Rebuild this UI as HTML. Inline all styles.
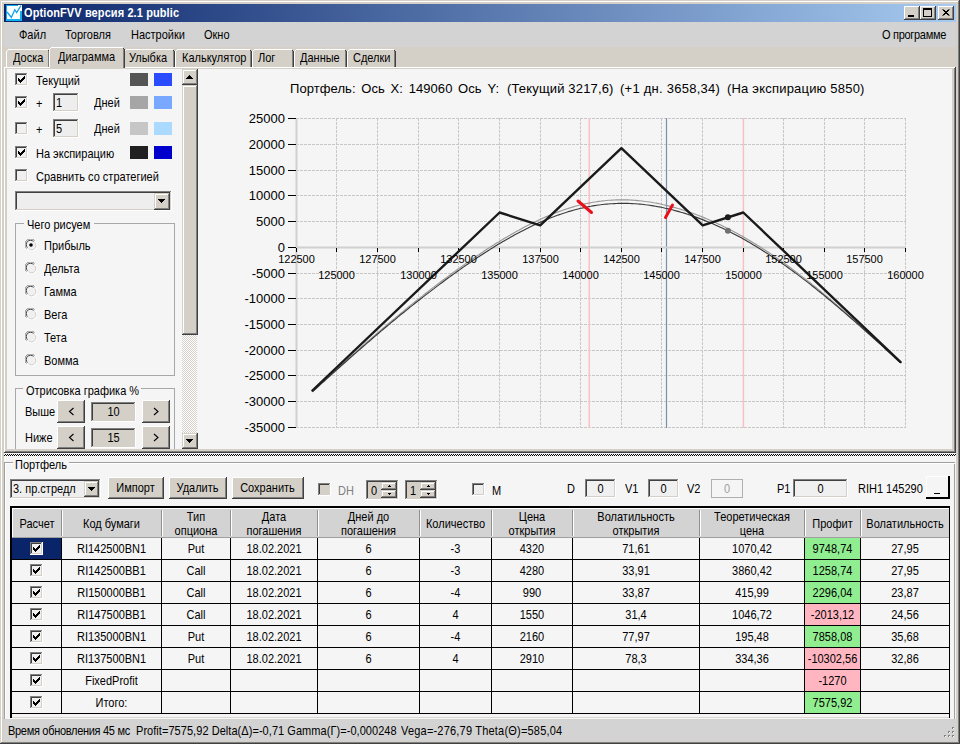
<!DOCTYPE html><html><head><meta charset="utf-8"><style>
html,body{margin:0;padding:0}
body{width:960px;height:744px;overflow:hidden;position:relative;background:#d4d0c8;font-family:"Liberation Sans",sans-serif;font-size:11px;color:#000}
.t{position:absolute;white-space:nowrap;line-height:13px;transform:scaleY(1.1);transform-origin:0 10.3px}
</style></head><body>
<div style="position:absolute;left:0px;top:0px;width:960px;height:744px;background:#404040"></div>
<div style="position:absolute;left:0px;top:0px;width:959px;height:743px;background:#d4d0c8"></div>
<div style="position:absolute;left:1px;top:1px;width:958px;height:742px;background:#808080"></div>
<div style="position:absolute;left:1px;top:1px;width:957px;height:741px;background:#fff"></div>
<div style="position:absolute;left:2px;top:2px;width:956px;height:740px;background:#d4d0c8"></div>
<div style="position:absolute;left:4px;top:4px;width:952px;height:18px;background:linear-gradient(to right,#0a246a,#a6caf0)"></div>
<svg style="position:absolute;left:6px;top:5px" width="16" height="16"><rect x="0" y="0" width="16" height="16" fill="#fff"/><rect x="0" y="0" width="1" height="16" fill="#12b0f0"/><rect x="0" y="14" width="16" height="2" fill="#12b0f0"/><rect x="14" y="6" width="2" height="10" fill="#12b0f0"/><rect x="0" y="0" width="12" height="1" fill="#12b0f0"/><path d="M0.5 7.5 L1.5 7.5 L5.3 12.5 L8.8 4.8 L10.7 7.5 L15 0.5" stroke="#12a0e8" stroke-width="1.3" fill="none"/></svg>
<div class="t" style="left:24px;top:7px;color:#fff;font-weight:bold;font-size:11px;letter-spacing:0.1px">OptionFVV версия 2.1 public</div>
<div style="position:absolute;left:904px;top:6px;width:16px;height:14px;background:#404040"></div>
<div style="position:absolute;left:904px;top:6px;width:15px;height:13px;background:#fff"></div>
<div style="position:absolute;left:905px;top:7px;width:14px;height:12px;background:#808080"></div>
<div style="position:absolute;left:905px;top:7px;width:13px;height:11px;background:#d4d0c8"></div>
<div style="position:absolute;left:920px;top:6px;width:16px;height:14px;background:#404040"></div>
<div style="position:absolute;left:920px;top:6px;width:15px;height:13px;background:#fff"></div>
<div style="position:absolute;left:921px;top:7px;width:14px;height:12px;background:#808080"></div>
<div style="position:absolute;left:921px;top:7px;width:13px;height:11px;background:#d4d0c8"></div>
<div style="position:absolute;left:938px;top:6px;width:16px;height:14px;background:#404040"></div>
<div style="position:absolute;left:938px;top:6px;width:15px;height:13px;background:#fff"></div>
<div style="position:absolute;left:939px;top:7px;width:14px;height:12px;background:#808080"></div>
<div style="position:absolute;left:939px;top:7px;width:13px;height:11px;background:#d4d0c8"></div>
<svg style="position:absolute;left:904px;top:6px" width="16" height="14"><rect x="4" y="9" width="6" height="2" fill="#000"/></svg>
<svg style="position:absolute;left:920px;top:6px" width="16" height="14"><rect x="3.5" y="2.5" width="8" height="8" fill="none" stroke="#000"/><rect x="3" y="3" width="9" height="1" fill="#000"/></svg>
<svg style="position:absolute;left:938px;top:6px" width="16" height="14"><path d="M4.5 3.5 L10.5 9.5 M10.5 3.5 L4.5 9.5 M5.5 3.5 L11.5 9.5 M11.5 3.5 L5.5 9.5" stroke="#000" stroke-width="1"/></svg>
<div style="position:absolute;left:4px;top:22px;width:952px;height:25px;background:#d3d3d3"></div>
<div class="t" style="left:19px;top:29px;">Файл</div>
<div class="t" style="left:65px;top:29px;">Торговля</div>
<div class="t" style="left:131px;top:29px;">Настройки</div>
<div class="t" style="left:204px;top:29px;">Окно</div>
<div class="t" style="left:882px;top:29px;letter-spacing:-0.3px">О программе</div>
<div style="position:absolute;left:4px;top:47px;width:952px;height:20px;background:#d4d0c8"></div>
<div style="position:absolute;left:4px;top:67px;width:952px;height:386px;background:#404040"></div>
<div style="position:absolute;left:4px;top:67px;width:951px;height:385px;background:#fff"></div>
<div style="position:absolute;left:5px;top:68px;width:950px;height:384px;background:#808080"></div>
<div style="position:absolute;left:5px;top:68px;width:949px;height:383px;background:#d4d0c8"></div>
<div style="position:absolute;left:8px;top:49px;width:40px;height:1px;background:#fff"></div>
<div style="position:absolute;left:7px;top:50px;width:1px;height:1px;background:#fff"></div>
<div style="position:absolute;left:6px;top:51px;width:1px;height:16px;background:#fff"></div>
<div style="position:absolute;left:48px;top:50px;width:1px;height:1px;background:#404040"></div>
<div style="position:absolute;left:48px;top:51px;width:1px;height:16px;background:#808080"></div>
<div style="position:absolute;left:49px;top:51px;width:1px;height:16px;background:#404040"></div>
<div class="t" style="left:13px;top:52px;">Доска</div>
<div style="position:absolute;left:126px;top:49px;width:47px;height:1px;background:#fff"></div>
<div style="position:absolute;left:125px;top:50px;width:1px;height:1px;background:#fff"></div>
<div style="position:absolute;left:124px;top:51px;width:1px;height:16px;background:#fff"></div>
<div style="position:absolute;left:173px;top:50px;width:1px;height:1px;background:#404040"></div>
<div style="position:absolute;left:173px;top:51px;width:1px;height:16px;background:#808080"></div>
<div style="position:absolute;left:174px;top:51px;width:1px;height:16px;background:#404040"></div>
<div class="t" style="left:129px;top:52px;">Улыбка</div>
<div style="position:absolute;left:177px;top:49px;width:73px;height:1px;background:#fff"></div>
<div style="position:absolute;left:176px;top:50px;width:1px;height:1px;background:#fff"></div>
<div style="position:absolute;left:175px;top:51px;width:1px;height:16px;background:#fff"></div>
<div style="position:absolute;left:250px;top:50px;width:1px;height:1px;background:#404040"></div>
<div style="position:absolute;left:250px;top:51px;width:1px;height:16px;background:#808080"></div>
<div style="position:absolute;left:251px;top:51px;width:1px;height:16px;background:#404040"></div>
<div class="t" style="left:182px;top:52px;">Калькулятор</div>
<div style="position:absolute;left:254px;top:49px;width:38px;height:1px;background:#fff"></div>
<div style="position:absolute;left:253px;top:50px;width:1px;height:1px;background:#fff"></div>
<div style="position:absolute;left:252px;top:51px;width:1px;height:16px;background:#fff"></div>
<div style="position:absolute;left:292px;top:50px;width:1px;height:1px;background:#404040"></div>
<div style="position:absolute;left:292px;top:51px;width:1px;height:16px;background:#808080"></div>
<div style="position:absolute;left:293px;top:51px;width:1px;height:16px;background:#404040"></div>
<div class="t" style="left:258px;top:52px;">Лог</div>
<div style="position:absolute;left:296px;top:49px;width:49px;height:1px;background:#fff"></div>
<div style="position:absolute;left:295px;top:50px;width:1px;height:1px;background:#fff"></div>
<div style="position:absolute;left:294px;top:51px;width:1px;height:16px;background:#fff"></div>
<div style="position:absolute;left:345px;top:50px;width:1px;height:1px;background:#404040"></div>
<div style="position:absolute;left:345px;top:51px;width:1px;height:16px;background:#808080"></div>
<div style="position:absolute;left:346px;top:51px;width:1px;height:16px;background:#404040"></div>
<div class="t" style="left:300px;top:52px;">Данные</div>
<div style="position:absolute;left:349px;top:49px;width:45px;height:1px;background:#fff"></div>
<div style="position:absolute;left:348px;top:50px;width:1px;height:1px;background:#fff"></div>
<div style="position:absolute;left:347px;top:51px;width:1px;height:16px;background:#fff"></div>
<div style="position:absolute;left:394px;top:50px;width:1px;height:1px;background:#404040"></div>
<div style="position:absolute;left:394px;top:51px;width:1px;height:16px;background:#808080"></div>
<div style="position:absolute;left:395px;top:51px;width:1px;height:16px;background:#404040"></div>
<div class="t" style="left:353px;top:52px;">Сделки</div>
<div style="position:absolute;left:50px;top:48px;width:73px;height:20px;background:#d4d0c8"></div>
<div style="position:absolute;left:51px;top:47px;width:72px;height:1px;background:#fff"></div>
<div style="position:absolute;left:50px;top:48px;width:1px;height:1px;background:#fff"></div>
<div style="position:absolute;left:49px;top:49px;width:1px;height:19px;background:#fff"></div>
<div style="position:absolute;left:123px;top:48px;width:1px;height:1px;background:#404040"></div>
<div style="position:absolute;left:123px;top:49px;width:1px;height:19px;background:#808080"></div>
<div style="position:absolute;left:124px;top:49px;width:1px;height:19px;background:#404040"></div>
<div style="position:absolute;left:50px;top:67px;width:73px;height:2px;background:#d4d0c8"></div>
<div class="t" style="left:58px;top:51px;">Диаграмма</div>
<div style="position:absolute;left:7px;top:69px;width:945px;height:380px;background:#f5f5f5"></div>
<div style="position:absolute;left:0;top:0;width:960px;height:744px;clip-path:inset(69px 8px 295px 7px)">
<div style="position:absolute;left:15px;top:73px;width:13px;height:13px;background:#fff"></div>
<div style="position:absolute;left:15px;top:73px;width:12px;height:12px;background:#808080"></div>
<div style="position:absolute;left:16px;top:74px;width:11px;height:11px;background:#d4d0c8"></div>
<div style="position:absolute;left:16px;top:74px;width:10px;height:10px;background:#404040"></div>
<div style="position:absolute;left:17px;top:75px;width:9px;height:9px;background:#f0f0f0"></div>
<svg style="position:absolute;left:15px;top:73px" width="13" height="13"><path d="M9 3h1v1h-1zM8 4h2v1h-2zM3 5h1v1h-1zM7 5h3v1h-3zM3 6h2v1h-2zM6 6h3v1h-3zM3 7h5v1h-5zM4 8h3v1h-3zM5 9h1v1h-1z" fill="#000"/></svg>
<div style="position:absolute;left:15px;top:96px;width:13px;height:13px;background:#fff"></div>
<div style="position:absolute;left:15px;top:96px;width:12px;height:12px;background:#808080"></div>
<div style="position:absolute;left:16px;top:97px;width:11px;height:11px;background:#d4d0c8"></div>
<div style="position:absolute;left:16px;top:97px;width:10px;height:10px;background:#404040"></div>
<div style="position:absolute;left:17px;top:98px;width:9px;height:9px;background:#f0f0f0"></div>
<svg style="position:absolute;left:15px;top:96px" width="13" height="13"><path d="M9 3h1v1h-1zM8 4h2v1h-2zM3 5h1v1h-1zM7 5h3v1h-3zM3 6h2v1h-2zM6 6h3v1h-3zM3 7h5v1h-5zM4 8h3v1h-3zM5 9h1v1h-1z" fill="#000"/></svg>
<div style="position:absolute;left:15px;top:122px;width:13px;height:13px;background:#fff"></div>
<div style="position:absolute;left:15px;top:122px;width:12px;height:12px;background:#808080"></div>
<div style="position:absolute;left:16px;top:123px;width:11px;height:11px;background:#d4d0c8"></div>
<div style="position:absolute;left:16px;top:123px;width:10px;height:10px;background:#404040"></div>
<div style="position:absolute;left:17px;top:124px;width:9px;height:9px;background:#f0f0f0"></div>
<div style="position:absolute;left:15px;top:146px;width:13px;height:13px;background:#fff"></div>
<div style="position:absolute;left:15px;top:146px;width:12px;height:12px;background:#808080"></div>
<div style="position:absolute;left:16px;top:147px;width:11px;height:11px;background:#d4d0c8"></div>
<div style="position:absolute;left:16px;top:147px;width:10px;height:10px;background:#404040"></div>
<div style="position:absolute;left:17px;top:148px;width:9px;height:9px;background:#f0f0f0"></div>
<svg style="position:absolute;left:15px;top:146px" width="13" height="13"><path d="M9 3h1v1h-1zM8 4h2v1h-2zM3 5h1v1h-1zM7 5h3v1h-3zM3 6h2v1h-2zM6 6h3v1h-3zM3 7h5v1h-5zM4 8h3v1h-3zM5 9h1v1h-1z" fill="#000"/></svg>
<div style="position:absolute;left:15px;top:169px;width:13px;height:13px;background:#fff"></div>
<div style="position:absolute;left:15px;top:169px;width:12px;height:12px;background:#808080"></div>
<div style="position:absolute;left:16px;top:170px;width:11px;height:11px;background:#d4d0c8"></div>
<div style="position:absolute;left:16px;top:170px;width:10px;height:10px;background:#404040"></div>
<div style="position:absolute;left:17px;top:171px;width:9px;height:9px;background:#f0f0f0"></div>
<div class="t" style="left:36px;top:75px;">Текущий</div>
<div class="t" style="left:36px;top:98px;">+</div>
<div class="t" style="left:36px;top:124px;">+</div>
<div style="position:absolute;left:53px;top:93px;width:26px;height:19px;background:#fff"></div>
<div style="position:absolute;left:53px;top:93px;width:25px;height:18px;background:#808080"></div>
<div style="position:absolute;left:54px;top:94px;width:24px;height:17px;background:#d4d0c8"></div>
<div style="position:absolute;left:54px;top:94px;width:23px;height:16px;background:#404040"></div>
<div style="position:absolute;left:55px;top:95px;width:22px;height:15px;background:#eeeeee"></div>
<div class="t" style="left:56px;top:97px;">1</div>
<div style="position:absolute;left:53px;top:119px;width:26px;height:19px;background:#fff"></div>
<div style="position:absolute;left:53px;top:119px;width:25px;height:18px;background:#808080"></div>
<div style="position:absolute;left:54px;top:120px;width:24px;height:17px;background:#d4d0c8"></div>
<div style="position:absolute;left:54px;top:120px;width:23px;height:16px;background:#404040"></div>
<div style="position:absolute;left:55px;top:121px;width:22px;height:15px;background:#eeeeee"></div>
<div class="t" style="left:56px;top:123px;">5</div>
<div class="t" style="left:94px;top:97px;">Дней</div>
<div class="t" style="left:94px;top:123px;">Дней</div>
<div style="position:absolute;left:130px;top:73px;width:18px;height:13px;background:#555555"></div>
<div style="position:absolute;left:154px;top:73px;width:18px;height:13px;background:#2a4bff"></div>
<div style="position:absolute;left:130px;top:96px;width:18px;height:13px;background:#a6a6a6"></div>
<div style="position:absolute;left:154px;top:96px;width:18px;height:13px;background:#78a8ff"></div>
<div style="position:absolute;left:130px;top:122px;width:18px;height:13px;background:#c6c6c6"></div>
<div style="position:absolute;left:154px;top:122px;width:18px;height:13px;background:#aadaff"></div>
<div style="position:absolute;left:130px;top:146px;width:18px;height:13px;background:#202020"></div>
<div style="position:absolute;left:154px;top:146px;width:18px;height:13px;background:#0000cc"></div>
<div class="t" style="left:36px;top:148px;">На экспирацию</div>
<div class="t" style="left:36px;top:171px;">Сравнить со стратегией</div>
<div style="position:absolute;left:15px;top:191px;width:157px;height:20px;background:#fff"></div>
<div style="position:absolute;left:15px;top:191px;width:156px;height:19px;background:#808080"></div>
<div style="position:absolute;left:16px;top:192px;width:155px;height:18px;background:#d4d0c8"></div>
<div style="position:absolute;left:16px;top:192px;width:154px;height:17px;background:#404040"></div>
<div style="position:absolute;left:17px;top:193px;width:153px;height:16px;background:#eeeeee"></div>
<div style="position:absolute;left:154px;top:193px;width:16px;height:17px;background:#404040"></div>
<div style="position:absolute;left:154px;top:193px;width:15px;height:16px;background:#d4d0c8"></div>
<div style="position:absolute;left:155px;top:194px;width:14px;height:15px;background:#808080"></div>
<div style="position:absolute;left:155px;top:194px;width:13px;height:14px;background:#fff"></div>
<div style="position:absolute;left:156px;top:195px;width:12px;height:13px;background:#d4d0c8"></div>
<svg style="position:absolute;left:154px;top:193px" width="16" height="16"><path d="M4 6h7v1h-7zM5 7h5v1h-5zM6 8h3v1h-3zM7 9h1v1h-1z" fill="#000"/></svg>
<div style="position:absolute;left:15px;top:223px;width:160px;height:153px;border:1px solid #a8a8a8;box-sizing:border-box"></div>
<div style="position:absolute;left:24px;top:221px;width:70px;height:4px;background:#f5f5f5"></div>
<div class="t" style="left:27px;top:219px;">Чего рисуем</div>
<svg style="position:absolute;left:25px;top:239px" width="12" height="12"><path d="M1.5 9.5 A5 5 0 0 1 9.5 1.5" stroke="#808080" fill="none"/><path d="M2.5 8.5 A3.8 3.8 0 0 1 8.5 2.5" stroke="#404040" fill="none"/><path d="M2.5 10.5 A5 5 0 0 0 10.5 2.5" stroke="#fff" fill="none"/><path d="M3.5 9.5 A3.8 3.8 0 0 0 9.5 3.5" stroke="#d4d0c8" fill="none"/><circle cx="6" cy="6" r="3.6" fill="#f0f0f0"/><circle cx="6" cy="6" r="1.8" fill="#000"/></svg>
<div class="t" style="left:44px;top:240px;">Прибыль</div>
<svg style="position:absolute;left:25px;top:262px" width="12" height="12"><path d="M1.5 9.5 A5 5 0 0 1 9.5 1.5" stroke="#808080" fill="none"/><path d="M2.5 8.5 A3.8 3.8 0 0 1 8.5 2.5" stroke="#404040" fill="none"/><path d="M2.5 10.5 A5 5 0 0 0 10.5 2.5" stroke="#fff" fill="none"/><path d="M3.5 9.5 A3.8 3.8 0 0 0 9.5 3.5" stroke="#d4d0c8" fill="none"/><circle cx="6" cy="6" r="3.6" fill="#f0f0f0"/></svg>
<div class="t" style="left:44px;top:263px;">Дельта</div>
<svg style="position:absolute;left:25px;top:285px" width="12" height="12"><path d="M1.5 9.5 A5 5 0 0 1 9.5 1.5" stroke="#808080" fill="none"/><path d="M2.5 8.5 A3.8 3.8 0 0 1 8.5 2.5" stroke="#404040" fill="none"/><path d="M2.5 10.5 A5 5 0 0 0 10.5 2.5" stroke="#fff" fill="none"/><path d="M3.5 9.5 A3.8 3.8 0 0 0 9.5 3.5" stroke="#d4d0c8" fill="none"/><circle cx="6" cy="6" r="3.6" fill="#f0f0f0"/></svg>
<div class="t" style="left:44px;top:286px;">Гамма</div>
<svg style="position:absolute;left:25px;top:308px" width="12" height="12"><path d="M1.5 9.5 A5 5 0 0 1 9.5 1.5" stroke="#808080" fill="none"/><path d="M2.5 8.5 A3.8 3.8 0 0 1 8.5 2.5" stroke="#404040" fill="none"/><path d="M2.5 10.5 A5 5 0 0 0 10.5 2.5" stroke="#fff" fill="none"/><path d="M3.5 9.5 A3.8 3.8 0 0 0 9.5 3.5" stroke="#d4d0c8" fill="none"/><circle cx="6" cy="6" r="3.6" fill="#f0f0f0"/></svg>
<div class="t" style="left:44px;top:309px;">Вега</div>
<svg style="position:absolute;left:25px;top:331px" width="12" height="12"><path d="M1.5 9.5 A5 5 0 0 1 9.5 1.5" stroke="#808080" fill="none"/><path d="M2.5 8.5 A3.8 3.8 0 0 1 8.5 2.5" stroke="#404040" fill="none"/><path d="M2.5 10.5 A5 5 0 0 0 10.5 2.5" stroke="#fff" fill="none"/><path d="M3.5 9.5 A3.8 3.8 0 0 0 9.5 3.5" stroke="#d4d0c8" fill="none"/><circle cx="6" cy="6" r="3.6" fill="#f0f0f0"/></svg>
<div class="t" style="left:44px;top:332px;">Тета</div>
<svg style="position:absolute;left:25px;top:354px" width="12" height="12"><path d="M1.5 9.5 A5 5 0 0 1 9.5 1.5" stroke="#808080" fill="none"/><path d="M2.5 8.5 A3.8 3.8 0 0 1 8.5 2.5" stroke="#404040" fill="none"/><path d="M2.5 10.5 A5 5 0 0 0 10.5 2.5" stroke="#fff" fill="none"/><path d="M3.5 9.5 A3.8 3.8 0 0 0 9.5 3.5" stroke="#d4d0c8" fill="none"/><circle cx="6" cy="6" r="3.6" fill="#f0f0f0"/></svg>
<div class="t" style="left:44px;top:355px;">Вомма</div>
<div style="position:absolute;left:15px;top:388px;width:160px;height:80px;border:1px solid #a8a8a8;box-sizing:border-box"></div>
<div style="position:absolute;left:23px;top:386px;width:118px;height:4px;background:#f5f5f5"></div>
<div class="t" style="left:26px;top:385px;">Отрисовка графика %</div>
<div class="t" style="left:25px;top:406px;">Выше</div>
<div style="position:absolute;left:57px;top:400px;width:28px;height:23px;background:#404040"></div>
<div style="position:absolute;left:57px;top:400px;width:27px;height:22px;background:#fff"></div>
<div style="position:absolute;left:58px;top:401px;width:26px;height:21px;background:#808080"></div>
<div style="position:absolute;left:58px;top:401px;width:25px;height:20px;background:#d4d0c8"></div>
<div style="position:absolute;left:91px;top:402px;width:45px;height:20px;background:#fff"></div>
<div style="position:absolute;left:91px;top:402px;width:44px;height:19px;background:#808080"></div>
<div style="position:absolute;left:92px;top:403px;width:43px;height:18px;background:#d4d0c8"></div>
<div style="position:absolute;left:92px;top:403px;width:42px;height:17px;background:#404040"></div>
<div style="position:absolute;left:93px;top:404px;width:41px;height:16px;background:#d4d0c8"></div>
<div class="t" style="left:91px;top:406px;width:45px;text-align:center;">10</div>
<div style="position:absolute;left:142px;top:400px;width:28px;height:23px;background:#404040"></div>
<div style="position:absolute;left:142px;top:400px;width:27px;height:22px;background:#fff"></div>
<div style="position:absolute;left:143px;top:401px;width:26px;height:21px;background:#808080"></div>
<div style="position:absolute;left:143px;top:401px;width:25px;height:20px;background:#d4d0c8"></div>
<svg style="position:absolute;left:0;top:400px" width="200" height="23"><path d="M73.5 8 L69.5 11.5 L73.5 15 M154 8 L158 11.5 L154 15" stroke="#000" stroke-width="1.1" fill="none"/></svg>
<div class="t" style="left:25px;top:432px;">Ниже</div>
<div style="position:absolute;left:57px;top:426px;width:28px;height:23px;background:#404040"></div>
<div style="position:absolute;left:57px;top:426px;width:27px;height:22px;background:#fff"></div>
<div style="position:absolute;left:58px;top:427px;width:26px;height:21px;background:#808080"></div>
<div style="position:absolute;left:58px;top:427px;width:25px;height:20px;background:#d4d0c8"></div>
<div style="position:absolute;left:91px;top:428px;width:45px;height:20px;background:#fff"></div>
<div style="position:absolute;left:91px;top:428px;width:44px;height:19px;background:#808080"></div>
<div style="position:absolute;left:92px;top:429px;width:43px;height:18px;background:#d4d0c8"></div>
<div style="position:absolute;left:92px;top:429px;width:42px;height:17px;background:#404040"></div>
<div style="position:absolute;left:93px;top:430px;width:41px;height:16px;background:#d4d0c8"></div>
<div class="t" style="left:91px;top:432px;width:45px;text-align:center;">15</div>
<div style="position:absolute;left:142px;top:426px;width:28px;height:23px;background:#404040"></div>
<div style="position:absolute;left:142px;top:426px;width:27px;height:22px;background:#fff"></div>
<div style="position:absolute;left:143px;top:427px;width:26px;height:21px;background:#808080"></div>
<div style="position:absolute;left:143px;top:427px;width:25px;height:20px;background:#d4d0c8"></div>
<svg style="position:absolute;left:0;top:426px" width="200" height="23"><path d="M73.5 8 L69.5 11.5 L73.5 15 M154 8 L158 11.5 L154 15" stroke="#000" stroke-width="1.1" fill="none"/></svg>
<div style="position:absolute;left:182px;top:69px;width:16px;height:380px;background:#f5f5f5"></div>
<div style="position:absolute;left:182px;top:69px;width:15px;height:380px;background-color:#e8e6e0;background-image:repeating-conic-gradient(#d4d0c8 0 25%,#ffffff 0 50%);background-size:2px 2px"></div>
<div style="position:absolute;left:182px;top:69px;width:16px;height:16px;background:#404040"></div>
<div style="position:absolute;left:182px;top:69px;width:15px;height:15px;background:#d4d0c8"></div>
<div style="position:absolute;left:183px;top:70px;width:14px;height:14px;background:#808080"></div>
<div style="position:absolute;left:183px;top:70px;width:13px;height:13px;background:#fff"></div>
<div style="position:absolute;left:184px;top:71px;width:12px;height:12px;background:#d4d0c8"></div>
<svg style="position:absolute;left:182px;top:69px" width="16" height="16"><path d="M7 6h1v1h-1zM6 7h3v1h-3zM5 8h5v1h-5zM4 9h7v1h-7z" fill="#000"/></svg>
<div style="position:absolute;left:182px;top:85px;width:16px;height:250px;background:#404040"></div>
<div style="position:absolute;left:182px;top:85px;width:15px;height:249px;background:#d4d0c8"></div>
<div style="position:absolute;left:183px;top:86px;width:14px;height:248px;background:#808080"></div>
<div style="position:absolute;left:183px;top:86px;width:13px;height:247px;background:#fff"></div>
<div style="position:absolute;left:184px;top:87px;width:12px;height:246px;background:#d4d0c8"></div>
<div style="position:absolute;left:182px;top:433px;width:16px;height:16px;background:#404040"></div>
<div style="position:absolute;left:182px;top:433px;width:15px;height:15px;background:#d4d0c8"></div>
<div style="position:absolute;left:183px;top:434px;width:14px;height:14px;background:#808080"></div>
<div style="position:absolute;left:183px;top:434px;width:13px;height:13px;background:#fff"></div>
<div style="position:absolute;left:184px;top:435px;width:12px;height:12px;background:#d4d0c8"></div>
<svg style="position:absolute;left:182px;top:433px" width="16" height="16"><path d="M4 6h7v1h-7zM5 7h5v1h-5zM6 8h3v1h-3zM7 9h1v1h-1z" fill="#000"/></svg>
<div class="t" style="left:290px;top:81px;transform:none;font-size:13px;line-height:15px;word-spacing:2px;letter-spacing:0.07px">Портфель: Ось X: 149060 Ось Y:</div>
<div class="t" style="left:507px;top:81px;transform:none;font-size:13px;line-height:15px;word-spacing:0px;letter-spacing:0.16px">(Текущий 3217,6)</div>
<div class="t" style="left:620px;top:81px;transform:none;font-size:13px;line-height:15px;word-spacing:0px;letter-spacing:0.25px">(+1 дн. 3658,34)</div>
<div class="t" style="left:727px;top:81px;transform:none;font-size:13px;line-height:15px;word-spacing:0px;letter-spacing:0.2px">(На экспирацию 5850)</div>
<svg style="position:absolute;left:0;top:0" width="960" height="744"><path d="M296 118.5H906 M296 144.5H906 M296 170.5H906 M296 195.5H906 M296 221.5H906 M296 273.5H906 M296 298.5H906 M296 324.5H906 M296 350.5H906 M296 375.5H906 M296 401.5H906 M296 427.5H906 M336.5 118V428 M377.5 118V428 M418.5 118V428 M458.5 118V428 M499.5 118V428 M540.5 118V428 M580.5 118V428 M621.5 118V428 M661.5 118V428 M702.5 118V428 M743.5 118V428 M783.5 118V428 M824.5 118V428 M864.5 118V428 M905.5 118V428" stroke="#c8c8c8" stroke-width="1" stroke-dasharray="3 1" fill="none"/><path d="M589.2 118V428 M743.4 118V428" stroke="#fac0c8" stroke-width="1.5"/><path d="M666.5 118V428" stroke="#7890a8" stroke-width="1.2"/><path d="M296.5 118V428 M296 247.5H906" stroke="#d0d0d0" stroke-width="2"/><path d="M288 118.5H296 M288 144.5H296 M288 170.5H296 M288 195.5H296 M288 221.5H296 M288 247.5H296 M288 273.5H296 M288 298.5H296 M288 324.5H296 M288 350.5H296 M288 375.5H296 M288 401.5H296 M288 427.5H296 M296.5 248V252 M336.5 248V252 M377.5 248V252 M418.5 248V252 M458.5 248V252 M499.5 248V252 M540.5 248V252 M580.5 248V252 M621.5 248V252 M661.5 248V252 M702.5 248V252 M743.5 248V252 M783.5 248V252 M824.5 248V252 M864.5 248V252 M905.5 248V252" stroke="#000" stroke-width="1"/><path d="M312.4 391.4 L314.4 389.6 L316.3 387.8 L318.3 386.0 L320.3 384.2 L322.2 382.4 L324.2 380.6 L326.1 378.8 L328.1 377.0 L330.1 375.2 L332.0 373.4 L334.0 371.6 L335.9 369.8 L337.9 368.0 L339.9 366.3 L341.8 364.5 L343.8 362.7 L345.8 361.0 L347.7 359.2 L349.7 357.4 L351.6 355.7 L353.6 353.9 L355.6 352.2 L357.5 350.5 L359.5 348.7 L361.4 347.0 L363.4 345.3 L365.4 343.5 L367.3 341.8 L369.3 340.1 L371.2 338.4 L373.2 336.7 L375.2 335.0 L377.1 333.3 L379.1 331.6 L381.0 330.0 L383.0 328.3 L385.0 326.6 L386.9 324.9 L388.9 323.3 L390.8 321.6 L392.8 320.0 L394.8 318.4 L396.7 316.7 L398.7 315.1 L400.6 313.5 L402.6 311.9 L404.6 310.2 L406.5 308.6 L408.5 307.0 L410.4 305.5 L412.4 303.9 L414.4 302.3 L416.3 300.7 L418.3 299.2 L420.2 297.6 L422.2 296.1 L424.2 294.5 L426.1 293.0 L428.1 291.5 L430.1 289.9 L432.0 288.4 L434.0 286.9 L435.9 285.4 L437.9 283.9 L439.9 282.5 L441.8 281.0 L443.8 279.5 L445.7 278.1 L447.7 276.6 L449.7 275.2 L451.6 273.7 L453.6 272.3 L455.5 270.9 L457.5 269.5 L459.5 268.1 L461.4 266.7 L463.4 265.3 L465.3 263.9 L467.3 262.5 L469.3 261.2 L471.2 259.8 L473.2 258.5 L475.1 257.1 L477.1 255.8 L479.1 254.5 L481.0 253.2 L483.0 251.9 L484.9 250.6 L486.9 249.3 L488.9 248.1 L490.8 246.8 L492.8 245.6 L494.7 244.3 L496.7 243.1 L498.7 241.9 L500.6 240.7 L502.6 239.5 L504.5 238.3 L506.5 237.2 L508.5 236.0 L510.4 234.9 L512.4 233.8 L514.4 232.7 L516.3 231.6 L518.3 230.5 L520.2 229.4 L522.2 228.3 L524.2 227.3 L526.1 226.3 L528.1 225.3 L530.0 224.3 L532.0 223.3 L534.0 222.3 L535.9 221.4 L537.9 220.4 L539.8 219.5 L541.8 218.6 L543.8 217.8 L545.7 216.9 L547.7 216.1 L549.6 215.2 L551.6 214.4 L553.6 213.6 L555.5 212.9 L557.5 212.1 L559.4 211.4 L561.4 210.7 L563.4 210.0 L565.3 209.4 L567.3 208.7 L569.2 208.1 L571.2 207.5 L573.2 206.9 L575.1 206.3 L577.1 205.8 L579.0 205.3 L581.0 204.8 L583.0 204.3 L584.9 203.9 L586.9 203.5 L588.8 203.1 L590.8 202.7 L592.8 202.3 L594.7 202.0 L596.7 201.7 L598.7 201.4 L600.6 201.2 L602.6 200.9 L604.5 200.7 L606.5 200.5 L608.5 200.3 L610.4 200.2 L612.4 200.1 L614.3 200.0 L616.3 199.9 L618.3 199.8 L620.2 199.8 L622.2 199.8 L624.1 199.8 L626.1 199.9 L628.1 199.9 L630.0 200.0 L632.0 200.1 L633.9 200.2 L635.9 200.4 L637.9 200.6 L639.8 200.8 L641.8 201.0 L643.7 201.2 L645.7 201.5 L647.7 201.7 L649.6 202.0 L651.6 202.3 L653.5 202.7 L655.5 203.0 L657.5 203.4 L659.4 203.8 L661.4 204.2 L663.3 204.7 L665.3 205.1 L667.3 205.6 L669.2 206.1 L671.2 206.6 L673.1 207.1 L675.1 207.6 L677.1 208.2 L679.0 208.8 L681.0 209.4 L683.0 210.0 L684.9 210.6 L686.9 211.3 L688.8 212.0 L690.8 212.6 L692.8 213.3 L694.7 214.0 L696.7 214.8 L698.6 215.5 L700.6 216.3 L702.6 217.1 L704.5 217.9 L706.5 218.7 L708.4 219.5 L710.4 220.4 L712.4 221.2 L714.3 222.1 L716.3 223.0 L718.2 223.9 L720.2 224.8 L722.2 225.8 L724.1 226.7 L726.1 227.7 L728.0 228.7 L730.0 229.7 L732.0 230.7 L733.9 231.7 L735.9 232.8 L737.8 233.8 L739.8 234.9 L741.8 236.0 L743.7 237.1 L745.7 238.2 L747.6 239.4 L749.6 240.5 L751.6 241.7 L753.5 242.9 L755.5 244.1 L757.4 245.3 L759.4 246.5 L761.4 247.7 L763.3 249.0 L765.3 250.2 L767.3 251.5 L769.2 252.8 L771.2 254.1 L773.1 255.5 L775.1 256.8 L777.1 258.1 L779.0 259.5 L781.0 260.9 L782.9 262.3 L784.9 263.7 L786.9 265.1 L788.8 266.5 L790.8 268.0 L792.7 269.4 L794.7 270.9 L796.7 272.4 L798.6 273.9 L800.6 275.4 L802.5 276.9 L804.5 278.4 L806.5 279.9 L808.4 281.5 L810.4 283.0 L812.3 284.6 L814.3 286.2 L816.3 287.8 L818.2 289.4 L820.2 291.0 L822.1 292.6 L824.1 294.2 L826.1 295.9 L828.0 297.5 L830.0 299.2 L831.9 300.8 L833.9 302.5 L835.9 304.2 L837.8 305.9 L839.8 307.6 L841.7 309.3 L843.7 311.0 L845.7 312.7 L847.6 314.4 L849.6 316.1 L851.6 317.8 L853.5 319.6 L855.5 321.3 L857.4 323.1 L859.4 324.8 L861.4 326.6 L863.3 328.4 L865.3 330.1 L867.2 331.9 L869.2 333.7 L871.2 335.5 L873.1 337.2 L875.1 339.0 L877.0 340.8 L879.0 342.6 L881.0 344.4 L882.9 346.2 L884.9 348.0 L886.8 349.9 L888.8 351.7 L890.8 353.5 L892.7 355.3 L894.7 357.1 L896.6 359.0 L898.6 360.8 L900.6 362.6" fill="none" stroke="#989898" stroke-width="1.15"/>
<path d="M312.4 391.9 L314.4 390.1 L316.3 388.3 L318.3 386.5 L320.3 384.7 L322.2 382.9 L324.2 381.2 L326.1 379.4 L328.1 377.6 L330.1 375.8 L332.0 374.1 L334.0 372.3 L335.9 370.5 L337.9 368.8 L339.9 367.0 L341.8 365.3 L343.8 363.5 L345.8 361.8 L347.7 360.0 L349.7 358.3 L351.6 356.6 L353.6 354.8 L355.6 353.1 L357.5 351.4 L359.5 349.7 L361.4 348.0 L363.4 346.3 L365.4 344.6 L367.3 342.9 L369.3 341.2 L371.2 339.5 L373.2 337.8 L375.2 336.1 L377.1 334.5 L379.1 332.8 L381.0 331.1 L383.0 329.5 L385.0 327.8 L386.9 326.2 L388.9 324.6 L390.8 322.9 L392.8 321.3 L394.8 319.7 L396.7 318.1 L398.7 316.4 L400.6 314.8 L402.6 313.2 L404.6 311.7 L406.5 310.1 L408.5 308.5 L410.4 306.9 L412.4 305.4 L414.4 303.8 L416.3 302.2 L418.3 300.7 L420.2 299.2 L422.2 297.6 L424.2 296.1 L426.1 294.6 L428.1 293.1 L430.1 291.6 L432.0 290.1 L434.0 288.6 L435.9 287.1 L437.9 285.6 L439.9 284.1 L441.8 282.7 L443.8 281.2 L445.7 279.8 L447.7 278.3 L449.7 276.9 L451.6 275.5 L453.6 274.1 L455.5 272.7 L457.5 271.3 L459.5 269.9 L461.4 268.5 L463.4 267.1 L465.3 265.8 L467.3 264.4 L469.3 263.1 L471.2 261.7 L473.2 260.4 L475.1 259.1 L477.1 257.8 L479.1 256.5 L481.0 255.2 L483.0 253.9 L484.9 252.7 L486.9 251.4 L488.9 250.2 L490.8 248.9 L492.8 247.7 L494.7 246.5 L496.7 245.3 L498.7 244.1 L500.6 243.0 L502.6 241.8 L504.5 240.7 L506.5 239.5 L508.5 238.4 L510.4 237.3 L512.4 236.2 L514.4 235.1 L516.3 234.0 L518.3 233.0 L520.2 232.0 L522.2 230.9 L524.2 229.9 L526.1 228.9 L528.1 228.0 L530.0 227.0 L532.0 226.0 L534.0 225.1 L535.9 224.2 L537.9 223.3 L539.8 222.4 L541.8 221.6 L543.8 220.7 L545.7 219.9 L547.7 219.1 L549.6 218.3 L551.6 217.5 L553.6 216.8 L555.5 216.0 L557.5 215.3 L559.4 214.6 L561.4 214.0 L563.4 213.3 L565.3 212.7 L567.3 212.0 L569.2 211.4 L571.2 210.9 L573.2 210.3 L575.1 209.8 L577.1 209.3 L579.0 208.8 L581.0 208.3 L583.0 207.9 L584.9 207.4 L586.9 207.0 L588.8 206.6 L590.8 206.3 L592.8 205.9 L594.7 205.6 L596.7 205.3 L598.7 205.0 L600.6 204.8 L602.6 204.5 L604.5 204.3 L606.5 204.1 L608.5 204.0 L610.4 203.8 L612.4 203.7 L614.3 203.6 L616.3 203.5 L618.3 203.4 L620.2 203.4 L622.2 203.4 L624.1 203.4 L626.1 203.4 L628.1 203.4 L630.0 203.5 L632.0 203.6 L633.9 203.7 L635.9 203.8 L637.9 204.0 L639.8 204.1 L641.8 204.3 L643.7 204.5 L645.7 204.8 L647.7 205.0 L649.6 205.3 L651.6 205.6 L653.5 205.9 L655.5 206.2 L657.5 206.6 L659.4 206.9 L661.4 207.3 L663.3 207.7 L665.3 208.2 L667.3 208.6 L669.2 209.1 L671.2 209.5 L673.1 210.0 L675.1 210.6 L677.1 211.1 L679.0 211.6 L681.0 212.2 L683.0 212.8 L684.9 213.4 L686.9 214.0 L688.8 214.7 L690.8 215.3 L692.8 216.0 L694.7 216.7 L696.7 217.4 L698.6 218.1 L700.6 218.9 L702.6 219.6 L704.5 220.4 L706.5 221.2 L708.4 222.0 L710.4 222.8 L712.4 223.6 L714.3 224.5 L716.3 225.4 L718.2 226.3 L720.2 227.2 L722.2 228.1 L724.1 229.0 L726.1 230.0 L728.0 230.9 L730.0 231.9 L732.0 232.9 L733.9 233.9 L735.9 235.0 L737.8 236.0 L739.8 237.1 L741.8 238.1 L743.7 239.2 L745.7 240.3 L747.6 241.4 L749.6 242.6 L751.6 243.7 L753.5 244.9 L755.5 246.1 L757.4 247.3 L759.4 248.5 L761.4 249.7 L763.3 250.9 L765.3 252.2 L767.3 253.4 L769.2 254.7 L771.2 256.0 L773.1 257.3 L775.1 258.6 L777.1 259.9 L779.0 261.3 L781.0 262.6 L782.9 264.0 L784.9 265.4 L786.9 266.8 L788.8 268.2 L790.8 269.6 L792.7 271.0 L794.7 272.5 L796.7 273.9 L798.6 275.4 L800.6 276.9 L802.5 278.4 L804.5 279.9 L806.5 281.4 L808.4 282.9 L810.4 284.4 L812.3 286.0 L814.3 287.5 L816.3 289.1 L818.2 290.7 L820.2 292.2 L822.1 293.8 L824.1 295.4 L826.1 297.0 L828.0 298.7 L830.0 300.3 L831.9 301.9 L833.9 303.6 L835.9 305.2 L837.8 306.9 L839.8 308.5 L841.7 310.2 L843.7 311.9 L845.7 313.6 L847.6 315.3 L849.6 317.0 L851.6 318.7 L853.5 320.4 L855.5 322.1 L857.4 323.8 L859.4 325.6 L861.4 327.3 L863.3 329.0 L865.3 330.8 L867.2 332.5 L869.2 334.3 L871.2 336.0 L873.1 337.8 L875.1 339.6 L877.0 341.4 L879.0 343.1 L881.0 344.9 L882.9 346.7 L884.9 348.5 L886.8 350.3 L888.8 352.1 L890.8 353.9 L892.7 355.7 L894.7 357.5 L896.6 359.3 L898.6 361.1 L900.6 362.9" fill="none" stroke="#3a3a3a" stroke-width="1.15"/>
<path d="M312.4 390.5 L499.6 212.5 L540.2 225.4 L621.4 148.2 L702.7 225.4 L743.3 212.5 L900.6 362.1" fill="none" stroke="#1a1a1a" stroke-width="2.4" stroke-linejoin="round" stroke-linecap="round"/><path d="M578 201 L591.5 212.5 M665.5 217.5 L672.5 205" stroke="#e8101c" stroke-width="3" stroke-linecap="round"/><circle cx="727.9" cy="217.2" r="3" fill="#1a1a1a"/><circle cx="727.9" cy="230.8" r="3" fill="#707070"/></svg>
<div class="t" style="left:186px;top:111px;width:99px;text-align:right;transform:none;font-size:13px;line-height:15px">25000</div>
<div class="t" style="left:186px;top:137px;width:99px;text-align:right;transform:none;font-size:13px;line-height:15px">20000</div>
<div class="t" style="left:186px;top:163px;width:99px;text-align:right;transform:none;font-size:13px;line-height:15px">15000</div>
<div class="t" style="left:186px;top:188px;width:99px;text-align:right;transform:none;font-size:13px;line-height:15px">10000</div>
<div class="t" style="left:186px;top:214px;width:99px;text-align:right;transform:none;font-size:13px;line-height:15px">5000</div>
<div class="t" style="left:186px;top:240px;width:99px;text-align:right;transform:none;font-size:13px;line-height:15px">0</div>
<div class="t" style="left:186px;top:266px;width:99px;text-align:right;transform:none;font-size:13px;line-height:15px">-5000</div>
<div class="t" style="left:186px;top:291px;width:99px;text-align:right;transform:none;font-size:13px;line-height:15px">-10000</div>
<div class="t" style="left:186px;top:317px;width:99px;text-align:right;transform:none;font-size:13px;line-height:15px">-15000</div>
<div class="t" style="left:186px;top:343px;width:99px;text-align:right;transform:none;font-size:13px;line-height:15px">-20000</div>
<div class="t" style="left:186px;top:368px;width:99px;text-align:right;transform:none;font-size:13px;line-height:15px">-25000</div>
<div class="t" style="left:186px;top:394px;width:99px;text-align:right;transform:none;font-size:13px;line-height:15px">-30000</div>
<div class="t" style="left:186px;top:420px;width:99px;text-align:right;transform:none;font-size:13px;line-height:15px">-35000</div>
<div class="t" style="left:266px;top:253px;width:61px;text-align:center;font-size:11px;transform:none">122500</div>
<div class="t" style="left:306px;top:269px;width:61px;text-align:center;font-size:11px;transform:none">125000</div>
<div class="t" style="left:347px;top:253px;width:61px;text-align:center;font-size:11px;transform:none">127500</div>
<div class="t" style="left:388px;top:269px;width:61px;text-align:center;font-size:11px;transform:none">130000</div>
<div class="t" style="left:428px;top:253px;width:61px;text-align:center;font-size:11px;transform:none">132500</div>
<div class="t" style="left:469px;top:269px;width:61px;text-align:center;font-size:11px;transform:none">135000</div>
<div class="t" style="left:510px;top:253px;width:61px;text-align:center;font-size:11px;transform:none">137500</div>
<div class="t" style="left:550px;top:269px;width:61px;text-align:center;font-size:11px;transform:none">140000</div>
<div class="t" style="left:591px;top:253px;width:61px;text-align:center;font-size:11px;transform:none">142500</div>
<div class="t" style="left:631px;top:269px;width:61px;text-align:center;font-size:11px;transform:none">145000</div>
<div class="t" style="left:672px;top:253px;width:61px;text-align:center;font-size:11px;transform:none">147500</div>
<div class="t" style="left:713px;top:269px;width:61px;text-align:center;font-size:11px;transform:none">150000</div>
<div class="t" style="left:753px;top:253px;width:61px;text-align:center;font-size:11px;transform:none">152500</div>
<div class="t" style="left:794px;top:269px;width:61px;text-align:center;font-size:11px;transform:none">155000</div>
<div class="t" style="left:834px;top:253px;width:61px;text-align:center;font-size:11px;transform:none">157500</div>
<div class="t" style="left:875px;top:269px;width:61px;text-align:center;font-size:11px;transform:none">160000</div>
</div>
<div style="position:absolute;left:4px;top:453px;width:952px;height:3px;background:#f5f5f5"></div>
<div style="position:absolute;left:4px;top:454px;width:952px;height:2px;background-image:repeating-conic-gradient(#000 0 25%,#f5f5f5 0 50%);background-size:2px 2px"></div>
<div style="position:absolute;left:4px;top:456px;width:952px;height:263px;background:#f5f5f5"></div>
<div style="position:absolute;left:4px;top:462px;width:951px;height:260px;border:1px solid #a0a0a0;border-bottom:none;box-sizing:border-box"></div>
<div style="position:absolute;left:5px;top:463px;width:949px;height:260px;border-left:1px solid #fff;border-top:1px solid #fff"></div>
<div style="position:absolute;left:13px;top:458px;width:56px;height:8px;background:#f5f5f5"></div>
<div class="t" style="left:15px;top:459px;">Портфель</div>
<div style="position:absolute;left:10px;top:479px;width:91px;height:20px;background:#fff"></div>
<div style="position:absolute;left:10px;top:479px;width:90px;height:19px;background:#808080"></div>
<div style="position:absolute;left:11px;top:480px;width:89px;height:18px;background:#d4d0c8"></div>
<div style="position:absolute;left:11px;top:480px;width:88px;height:17px;background:#404040"></div>
<div style="position:absolute;left:12px;top:481px;width:87px;height:16px;background:#eeeeee"></div>
<div class="t" style="left:13px;top:483px;">3. пр.стредл</div>
<div style="position:absolute;left:84px;top:481px;width:15px;height:16px;background:#404040"></div>
<div style="position:absolute;left:84px;top:481px;width:14px;height:15px;background:#d4d0c8"></div>
<div style="position:absolute;left:85px;top:482px;width:13px;height:14px;background:#808080"></div>
<div style="position:absolute;left:85px;top:482px;width:12px;height:13px;background:#fff"></div>
<div style="position:absolute;left:86px;top:483px;width:11px;height:12px;background:#d4d0c8"></div>
<svg style="position:absolute;left:84px;top:481px" width="15" height="16"><path d="M4 6h7v1h-7zM5 7h5v1h-5zM6 8h3v1h-3zM7 9h1v1h-1z" fill="#000"/></svg>
<div style="position:absolute;left:108px;top:477px;width:56px;height:22px;background:#404040"></div>
<div style="position:absolute;left:108px;top:477px;width:55px;height:21px;background:#fff"></div>
<div style="position:absolute;left:109px;top:478px;width:54px;height:20px;background:#808080"></div>
<div style="position:absolute;left:109px;top:478px;width:53px;height:19px;background:#d4d0c8"></div>
<div class="t" style="left:108px;top:482px;width:55px;text-align:center;">Импорт</div>
<div style="position:absolute;left:169px;top:477px;width:58px;height:22px;background:#404040"></div>
<div style="position:absolute;left:169px;top:477px;width:57px;height:21px;background:#fff"></div>
<div style="position:absolute;left:170px;top:478px;width:56px;height:20px;background:#808080"></div>
<div style="position:absolute;left:170px;top:478px;width:55px;height:19px;background:#d4d0c8"></div>
<div class="t" style="left:169px;top:482px;width:57px;text-align:center;">Удалить</div>
<div style="position:absolute;left:232px;top:477px;width:72px;height:22px;background:#404040"></div>
<div style="position:absolute;left:232px;top:477px;width:71px;height:21px;background:#fff"></div>
<div style="position:absolute;left:233px;top:478px;width:70px;height:20px;background:#808080"></div>
<div style="position:absolute;left:233px;top:478px;width:69px;height:19px;background:#d4d0c8"></div>
<div class="t" style="left:232px;top:482px;width:71px;text-align:center;">Сохранить</div>
<div style="position:absolute;left:318px;top:483px;width:13px;height:13px;background:#fff"></div>
<div style="position:absolute;left:318px;top:483px;width:12px;height:12px;background:#808080"></div>
<div style="position:absolute;left:319px;top:484px;width:11px;height:11px;background:#d4d0c8"></div>
<div style="position:absolute;left:319px;top:484px;width:10px;height:10px;background:#404040"></div>
<div style="position:absolute;left:320px;top:485px;width:9px;height:9px;background:#d4d0c8"></div>
<div class="t" style="left:338px;top:485px;color:#808080">DH</div>
<div style="position:absolute;left:366px;top:480px;width:33px;height:20px;background:#fff"></div>
<div style="position:absolute;left:366px;top:480px;width:32px;height:19px;background:#808080"></div>
<div style="position:absolute;left:367px;top:481px;width:31px;height:18px;background:#d4d0c8"></div>
<div style="position:absolute;left:367px;top:481px;width:30px;height:17px;background:#404040"></div>
<div style="position:absolute;left:368px;top:482px;width:29px;height:16px;background:#d4d0c8"></div>
<div class="t" style="left:371px;top:485px;">0</div>
<div style="position:absolute;left:381px;top:482px;width:16px;height:8px;background:#404040"></div>
<div style="position:absolute;left:381px;top:482px;width:15px;height:7px;background:#d4d0c8"></div>
<div style="position:absolute;left:382px;top:483px;width:14px;height:6px;background:#808080"></div>
<div style="position:absolute;left:382px;top:483px;width:13px;height:5px;background:#fff"></div>
<div style="position:absolute;left:383px;top:484px;width:12px;height:4px;background:#d4d0c8"></div>
<div style="position:absolute;left:381px;top:490px;width:16px;height:8px;background:#404040"></div>
<div style="position:absolute;left:381px;top:490px;width:15px;height:7px;background:#d4d0c8"></div>
<div style="position:absolute;left:382px;top:491px;width:14px;height:6px;background:#808080"></div>
<div style="position:absolute;left:382px;top:491px;width:13px;height:5px;background:#fff"></div>
<div style="position:absolute;left:383px;top:492px;width:12px;height:4px;background:#d4d0c8"></div>
<svg style="position:absolute;left:381px;top:482px" width="16" height="16"><path d="M8 3h1v1h-1zM7 4h3v1h-3zM7 11h3v1h-3zM8 12h1v1h-1z" fill="#000"/></svg>
<div style="position:absolute;left:405px;top:480px;width:33px;height:20px;background:#fff"></div>
<div style="position:absolute;left:405px;top:480px;width:32px;height:19px;background:#808080"></div>
<div style="position:absolute;left:406px;top:481px;width:31px;height:18px;background:#d4d0c8"></div>
<div style="position:absolute;left:406px;top:481px;width:30px;height:17px;background:#404040"></div>
<div style="position:absolute;left:407px;top:482px;width:29px;height:16px;background:#d4d0c8"></div>
<div class="t" style="left:410px;top:485px;">1</div>
<div style="position:absolute;left:420px;top:482px;width:16px;height:8px;background:#404040"></div>
<div style="position:absolute;left:420px;top:482px;width:15px;height:7px;background:#d4d0c8"></div>
<div style="position:absolute;left:421px;top:483px;width:14px;height:6px;background:#808080"></div>
<div style="position:absolute;left:421px;top:483px;width:13px;height:5px;background:#fff"></div>
<div style="position:absolute;left:422px;top:484px;width:12px;height:4px;background:#d4d0c8"></div>
<div style="position:absolute;left:420px;top:490px;width:16px;height:8px;background:#404040"></div>
<div style="position:absolute;left:420px;top:490px;width:15px;height:7px;background:#d4d0c8"></div>
<div style="position:absolute;left:421px;top:491px;width:14px;height:6px;background:#808080"></div>
<div style="position:absolute;left:421px;top:491px;width:13px;height:5px;background:#fff"></div>
<div style="position:absolute;left:422px;top:492px;width:12px;height:4px;background:#d4d0c8"></div>
<svg style="position:absolute;left:420px;top:482px" width="16" height="16"><path d="M8 3h1v1h-1zM7 4h3v1h-3zM7 11h3v1h-3zM8 12h1v1h-1z" fill="#000"/></svg>
<div style="position:absolute;left:472px;top:483px;width:13px;height:13px;background:#fff"></div>
<div style="position:absolute;left:472px;top:483px;width:12px;height:12px;background:#808080"></div>
<div style="position:absolute;left:473px;top:484px;width:11px;height:11px;background:#d4d0c8"></div>
<div style="position:absolute;left:473px;top:484px;width:10px;height:10px;background:#404040"></div>
<div style="position:absolute;left:474px;top:485px;width:9px;height:9px;background:#eeeeee"></div>
<div class="t" style="left:492px;top:485px;">M</div>
<div class="t" style="left:567px;top:483px;">D</div>
<div style="position:absolute;left:585px;top:479px;width:31px;height:19px;background:#fff"></div>
<div style="position:absolute;left:585px;top:479px;width:30px;height:18px;background:#808080"></div>
<div style="position:absolute;left:586px;top:480px;width:29px;height:17px;background:#d4d0c8"></div>
<div style="position:absolute;left:586px;top:480px;width:28px;height:16px;background:#404040"></div>
<div style="position:absolute;left:587px;top:481px;width:27px;height:15px;background:#f0f0f0"></div>
<div class="t" style="left:585px;top:483px;width:31px;text-align:center;">0</div>
<div class="t" style="left:625px;top:483px;">V1</div>
<div style="position:absolute;left:648px;top:479px;width:31px;height:19px;background:#fff"></div>
<div style="position:absolute;left:648px;top:479px;width:30px;height:18px;background:#808080"></div>
<div style="position:absolute;left:649px;top:480px;width:29px;height:17px;background:#d4d0c8"></div>
<div style="position:absolute;left:649px;top:480px;width:28px;height:16px;background:#404040"></div>
<div style="position:absolute;left:650px;top:481px;width:27px;height:15px;background:#f0f0f0"></div>
<div class="t" style="left:648px;top:483px;width:31px;text-align:center;">0</div>
<div class="t" style="left:687px;top:483px;">V2</div>
<div style="position:absolute;left:711px;top:479px;width:32px;height:19px;border:1px solid #b0b0b0;box-sizing:border-box;background:#f5f5f5"></div>
<div class="t" style="left:711px;top:483px;width:32px;text-align:center;color:#a0a0a0">0</div>
<div class="t" style="left:777px;top:483px;">P1</div>
<div style="position:absolute;left:793px;top:479px;width:55px;height:19px;background:#fff"></div>
<div style="position:absolute;left:793px;top:479px;width:54px;height:18px;background:#808080"></div>
<div style="position:absolute;left:794px;top:480px;width:53px;height:17px;background:#d4d0c8"></div>
<div style="position:absolute;left:794px;top:480px;width:52px;height:16px;background:#404040"></div>
<div style="position:absolute;left:795px;top:481px;width:51px;height:15px;background:#f0f0f0"></div>
<div class="t" style="left:793px;top:483px;width:55px;text-align:center;">0</div>
<div class="t" style="left:858px;top:483px;">RIH1 145290</div>
<div style="position:absolute;left:926px;top:476px;width:24px;height:23px;background:#000"></div>
<div style="position:absolute;left:926px;top:476px;width:22px;height:21px;background:#fff"></div>
<div style="position:absolute;left:927px;top:477px;width:21px;height:20px;background:#f5f5f5"></div>
<div style="position:absolute;left:934px;top:493px;width:6px;height:1px;background:#000"></div>
<div style="position:absolute;left:10px;top:506px;width:940px;height:208px;background:#f5f5f5"></div>
<div style="position:absolute;left:12px;top:508px;width:937px;height:30px;background:#d3d3d3"></div>
<div style="position:absolute;left:12px;top:508px;width:937px;height:1px;background:#fff"></div>
<div style="position:absolute;left:12px;top:508px;width:1px;height:29px;background:#fff"></div>
<div class="t" style="left:13px;top:518px;width:48px;text-align:center;line-height:12.5px">Расчет</div>
<div style="position:absolute;left:61px;top:510px;width:1px;height:26px;background:#909090"></div>
<div style="position:absolute;left:62px;top:510px;width:1px;height:26px;background:#fff"></div>
<div class="t" style="left:62px;top:518px;width:99px;text-align:center;line-height:12.5px">Код бумаги</div>
<div style="position:absolute;left:161px;top:510px;width:1px;height:26px;background:#909090"></div>
<div style="position:absolute;left:162px;top:510px;width:1px;height:26px;background:#fff"></div>
<div class="t" style="left:162px;top:511px;width:68px;text-align:center;line-height:12.5px">Тип<br>опциона</div>
<div style="position:absolute;left:230px;top:510px;width:1px;height:26px;background:#909090"></div>
<div style="position:absolute;left:231px;top:510px;width:1px;height:26px;background:#fff"></div>
<div class="t" style="left:231px;top:511px;width:86px;text-align:center;line-height:12.5px">Дата<br>погашения</div>
<div style="position:absolute;left:317px;top:510px;width:1px;height:26px;background:#909090"></div>
<div style="position:absolute;left:318px;top:510px;width:1px;height:26px;background:#fff"></div>
<div class="t" style="left:318px;top:511px;width:101px;text-align:center;line-height:12.5px">Дней до<br>погашения</div>
<div style="position:absolute;left:419px;top:510px;width:1px;height:26px;background:#909090"></div>
<div style="position:absolute;left:420px;top:510px;width:1px;height:26px;background:#fff"></div>
<div class="t" style="left:420px;top:518px;width:71px;text-align:center;line-height:12.5px">Количество</div>
<div style="position:absolute;left:491px;top:510px;width:1px;height:26px;background:#909090"></div>
<div style="position:absolute;left:492px;top:510px;width:1px;height:26px;background:#fff"></div>
<div class="t" style="left:492px;top:511px;width:80px;text-align:center;line-height:12.5px">Цена<br>открытия</div>
<div style="position:absolute;left:572px;top:510px;width:1px;height:26px;background:#909090"></div>
<div style="position:absolute;left:573px;top:510px;width:1px;height:26px;background:#fff"></div>
<div class="t" style="left:573px;top:511px;width:126px;text-align:center;line-height:12.5px">Волатильность<br>открытия</div>
<div style="position:absolute;left:699px;top:510px;width:1px;height:26px;background:#909090"></div>
<div style="position:absolute;left:700px;top:510px;width:1px;height:26px;background:#fff"></div>
<div class="t" style="left:700px;top:511px;width:104px;text-align:center;line-height:12.5px">Теоретическая<br>цена</div>
<div style="position:absolute;left:804px;top:510px;width:1px;height:26px;background:#909090"></div>
<div style="position:absolute;left:805px;top:510px;width:1px;height:26px;background:#fff"></div>
<div class="t" style="left:805px;top:518px;width:55px;text-align:center;line-height:12.5px">Профит</div>
<div style="position:absolute;left:860px;top:510px;width:1px;height:26px;background:#909090"></div>
<div style="position:absolute;left:861px;top:510px;width:1px;height:26px;background:#fff"></div>
<div class="t" style="left:861px;top:518px;width:88px;text-align:center;line-height:12.5px">Волатильность</div>
<div style="position:absolute;left:12px;top:537px;width:937px;height:1px;background:#a0a0a0"></div>
<div style="position:absolute;left:12px;top:538px;width:49px;height:21px;background:#0a246a"></div>
<div style="position:absolute;left:805px;top:538px;width:55px;height:21px;background:#90ee90"></div>
<div style="position:absolute;left:30px;top:542px;width:13px;height:13px;background:#fff"></div>
<div style="position:absolute;left:30px;top:542px;width:12px;height:12px;background:#808080"></div>
<div style="position:absolute;left:31px;top:543px;width:11px;height:11px;background:#d4d0c8"></div>
<div style="position:absolute;left:31px;top:543px;width:10px;height:10px;background:#404040"></div>
<div style="position:absolute;left:32px;top:544px;width:9px;height:9px;background:#f0f0f0"></div>
<svg style="position:absolute;left:30px;top:542px" width="13" height="13"><path d="M9 3h1v1h-1zM8 4h2v1h-2zM3 5h1v1h-1zM7 5h3v1h-3zM3 6h2v1h-2zM6 6h3v1h-3zM3 7h5v1h-5zM4 8h3v1h-3zM5 9h1v1h-1z" fill="#000"/></svg>
<div class="t" style="left:62px;top:543px;width:99px;text-align:center;">RI142500BN1</div>
<div class="t" style="left:162px;top:543px;width:68px;text-align:center;">Put</div>
<div class="t" style="left:231px;top:543px;width:86px;text-align:center;">18.02.2021</div>
<div class="t" style="left:318px;top:543px;width:101px;text-align:center;">6</div>
<div class="t" style="left:420px;top:543px;width:71px;text-align:center;">-3</div>
<div class="t" style="left:492px;top:543px;width:80px;text-align:center;">4320</div>
<div class="t" style="left:573px;top:543px;width:126px;text-align:center;">71,61</div>
<div class="t" style="left:700px;top:543px;width:104px;text-align:center;">1070,42</div>
<div class="t" style="left:805px;top:543px;width:55px;text-align:center;">9748,74</div>
<div class="t" style="left:861px;top:543px;width:88px;text-align:center;">27,95</div>
<div style="position:absolute;left:10px;top:559px;width:940px;height:1px;background:#000"></div>
<div style="position:absolute;left:805px;top:560px;width:55px;height:21px;background:#90ee90"></div>
<div style="position:absolute;left:30px;top:564px;width:13px;height:13px;background:#fff"></div>
<div style="position:absolute;left:30px;top:564px;width:12px;height:12px;background:#808080"></div>
<div style="position:absolute;left:31px;top:565px;width:11px;height:11px;background:#d4d0c8"></div>
<div style="position:absolute;left:31px;top:565px;width:10px;height:10px;background:#404040"></div>
<div style="position:absolute;left:32px;top:566px;width:9px;height:9px;background:#f0f0f0"></div>
<svg style="position:absolute;left:30px;top:564px" width="13" height="13"><path d="M9 3h1v1h-1zM8 4h2v1h-2zM3 5h1v1h-1zM7 5h3v1h-3zM3 6h2v1h-2zM6 6h3v1h-3zM3 7h5v1h-5zM4 8h3v1h-3zM5 9h1v1h-1z" fill="#000"/></svg>
<div class="t" style="left:62px;top:565px;width:99px;text-align:center;">RI142500BB1</div>
<div class="t" style="left:162px;top:565px;width:68px;text-align:center;">Call</div>
<div class="t" style="left:231px;top:565px;width:86px;text-align:center;">18.02.2021</div>
<div class="t" style="left:318px;top:565px;width:101px;text-align:center;">6</div>
<div class="t" style="left:420px;top:565px;width:71px;text-align:center;">-3</div>
<div class="t" style="left:492px;top:565px;width:80px;text-align:center;">4280</div>
<div class="t" style="left:573px;top:565px;width:126px;text-align:center;">33,91</div>
<div class="t" style="left:700px;top:565px;width:104px;text-align:center;">3860,42</div>
<div class="t" style="left:805px;top:565px;width:55px;text-align:center;">1258,74</div>
<div class="t" style="left:861px;top:565px;width:88px;text-align:center;">27,95</div>
<div style="position:absolute;left:10px;top:581px;width:940px;height:1px;background:#000"></div>
<div style="position:absolute;left:805px;top:582px;width:55px;height:21px;background:#90ee90"></div>
<div style="position:absolute;left:30px;top:586px;width:13px;height:13px;background:#fff"></div>
<div style="position:absolute;left:30px;top:586px;width:12px;height:12px;background:#808080"></div>
<div style="position:absolute;left:31px;top:587px;width:11px;height:11px;background:#d4d0c8"></div>
<div style="position:absolute;left:31px;top:587px;width:10px;height:10px;background:#404040"></div>
<div style="position:absolute;left:32px;top:588px;width:9px;height:9px;background:#f0f0f0"></div>
<svg style="position:absolute;left:30px;top:586px" width="13" height="13"><path d="M9 3h1v1h-1zM8 4h2v1h-2zM3 5h1v1h-1zM7 5h3v1h-3zM3 6h2v1h-2zM6 6h3v1h-3zM3 7h5v1h-5zM4 8h3v1h-3zM5 9h1v1h-1z" fill="#000"/></svg>
<div class="t" style="left:62px;top:587px;width:99px;text-align:center;">RI150000BB1</div>
<div class="t" style="left:162px;top:587px;width:68px;text-align:center;">Call</div>
<div class="t" style="left:231px;top:587px;width:86px;text-align:center;">18.02.2021</div>
<div class="t" style="left:318px;top:587px;width:101px;text-align:center;">6</div>
<div class="t" style="left:420px;top:587px;width:71px;text-align:center;">-4</div>
<div class="t" style="left:492px;top:587px;width:80px;text-align:center;">990</div>
<div class="t" style="left:573px;top:587px;width:126px;text-align:center;">33,87</div>
<div class="t" style="left:700px;top:587px;width:104px;text-align:center;">415,99</div>
<div class="t" style="left:805px;top:587px;width:55px;text-align:center;">2296,04</div>
<div class="t" style="left:861px;top:587px;width:88px;text-align:center;">23,87</div>
<div style="position:absolute;left:10px;top:603px;width:940px;height:1px;background:#000"></div>
<div style="position:absolute;left:805px;top:604px;width:55px;height:21px;background:#ffb6c1"></div>
<div style="position:absolute;left:30px;top:608px;width:13px;height:13px;background:#fff"></div>
<div style="position:absolute;left:30px;top:608px;width:12px;height:12px;background:#808080"></div>
<div style="position:absolute;left:31px;top:609px;width:11px;height:11px;background:#d4d0c8"></div>
<div style="position:absolute;left:31px;top:609px;width:10px;height:10px;background:#404040"></div>
<div style="position:absolute;left:32px;top:610px;width:9px;height:9px;background:#f0f0f0"></div>
<svg style="position:absolute;left:30px;top:608px" width="13" height="13"><path d="M9 3h1v1h-1zM8 4h2v1h-2zM3 5h1v1h-1zM7 5h3v1h-3zM3 6h2v1h-2zM6 6h3v1h-3zM3 7h5v1h-5zM4 8h3v1h-3zM5 9h1v1h-1z" fill="#000"/></svg>
<div class="t" style="left:62px;top:609px;width:99px;text-align:center;">RI147500BB1</div>
<div class="t" style="left:162px;top:609px;width:68px;text-align:center;">Call</div>
<div class="t" style="left:231px;top:609px;width:86px;text-align:center;">18.02.2021</div>
<div class="t" style="left:318px;top:609px;width:101px;text-align:center;">6</div>
<div class="t" style="left:420px;top:609px;width:71px;text-align:center;">4</div>
<div class="t" style="left:492px;top:609px;width:80px;text-align:center;">1550</div>
<div class="t" style="left:573px;top:609px;width:126px;text-align:center;">31,4</div>
<div class="t" style="left:700px;top:609px;width:104px;text-align:center;">1046,72</div>
<div class="t" style="left:805px;top:609px;width:55px;text-align:center;">-2013,12</div>
<div class="t" style="left:861px;top:609px;width:88px;text-align:center;">24,56</div>
<div style="position:absolute;left:10px;top:625px;width:940px;height:1px;background:#000"></div>
<div style="position:absolute;left:805px;top:626px;width:55px;height:21px;background:#90ee90"></div>
<div style="position:absolute;left:30px;top:630px;width:13px;height:13px;background:#fff"></div>
<div style="position:absolute;left:30px;top:630px;width:12px;height:12px;background:#808080"></div>
<div style="position:absolute;left:31px;top:631px;width:11px;height:11px;background:#d4d0c8"></div>
<div style="position:absolute;left:31px;top:631px;width:10px;height:10px;background:#404040"></div>
<div style="position:absolute;left:32px;top:632px;width:9px;height:9px;background:#f0f0f0"></div>
<svg style="position:absolute;left:30px;top:630px" width="13" height="13"><path d="M9 3h1v1h-1zM8 4h2v1h-2zM3 5h1v1h-1zM7 5h3v1h-3zM3 6h2v1h-2zM6 6h3v1h-3zM3 7h5v1h-5zM4 8h3v1h-3zM5 9h1v1h-1z" fill="#000"/></svg>
<div class="t" style="left:62px;top:631px;width:99px;text-align:center;">RI135000BN1</div>
<div class="t" style="left:162px;top:631px;width:68px;text-align:center;">Put</div>
<div class="t" style="left:231px;top:631px;width:86px;text-align:center;">18.02.2021</div>
<div class="t" style="left:318px;top:631px;width:101px;text-align:center;">6</div>
<div class="t" style="left:420px;top:631px;width:71px;text-align:center;">-4</div>
<div class="t" style="left:492px;top:631px;width:80px;text-align:center;">2160</div>
<div class="t" style="left:573px;top:631px;width:126px;text-align:center;">77,97</div>
<div class="t" style="left:700px;top:631px;width:104px;text-align:center;">195,48</div>
<div class="t" style="left:805px;top:631px;width:55px;text-align:center;">7858,08</div>
<div class="t" style="left:861px;top:631px;width:88px;text-align:center;">35,68</div>
<div style="position:absolute;left:10px;top:647px;width:940px;height:1px;background:#000"></div>
<div style="position:absolute;left:805px;top:648px;width:55px;height:21px;background:#ffb6c1"></div>
<div style="position:absolute;left:30px;top:652px;width:13px;height:13px;background:#fff"></div>
<div style="position:absolute;left:30px;top:652px;width:12px;height:12px;background:#808080"></div>
<div style="position:absolute;left:31px;top:653px;width:11px;height:11px;background:#d4d0c8"></div>
<div style="position:absolute;left:31px;top:653px;width:10px;height:10px;background:#404040"></div>
<div style="position:absolute;left:32px;top:654px;width:9px;height:9px;background:#f0f0f0"></div>
<svg style="position:absolute;left:30px;top:652px" width="13" height="13"><path d="M9 3h1v1h-1zM8 4h2v1h-2zM3 5h1v1h-1zM7 5h3v1h-3zM3 6h2v1h-2zM6 6h3v1h-3zM3 7h5v1h-5zM4 8h3v1h-3zM5 9h1v1h-1z" fill="#000"/></svg>
<div class="t" style="left:62px;top:653px;width:99px;text-align:center;">RI137500BN1</div>
<div class="t" style="left:162px;top:653px;width:68px;text-align:center;">Put</div>
<div class="t" style="left:231px;top:653px;width:86px;text-align:center;">18.02.2021</div>
<div class="t" style="left:318px;top:653px;width:101px;text-align:center;">6</div>
<div class="t" style="left:420px;top:653px;width:71px;text-align:center;">4</div>
<div class="t" style="left:492px;top:653px;width:80px;text-align:center;">2910</div>
<div class="t" style="left:573px;top:653px;width:126px;text-align:center;">78,3</div>
<div class="t" style="left:700px;top:653px;width:104px;text-align:center;">334,36</div>
<div class="t" style="left:805px;top:653px;width:55px;text-align:center;">-10302,56</div>
<div class="t" style="left:861px;top:653px;width:88px;text-align:center;">32,86</div>
<div style="position:absolute;left:10px;top:669px;width:940px;height:1px;background:#000"></div>
<div style="position:absolute;left:805px;top:670px;width:55px;height:21px;background:#ffb6c1"></div>
<div style="position:absolute;left:30px;top:674px;width:13px;height:13px;background:#fff"></div>
<div style="position:absolute;left:30px;top:674px;width:12px;height:12px;background:#808080"></div>
<div style="position:absolute;left:31px;top:675px;width:11px;height:11px;background:#d4d0c8"></div>
<div style="position:absolute;left:31px;top:675px;width:10px;height:10px;background:#404040"></div>
<div style="position:absolute;left:32px;top:676px;width:9px;height:9px;background:#f0f0f0"></div>
<svg style="position:absolute;left:30px;top:674px" width="13" height="13"><path d="M9 3h1v1h-1zM8 4h2v1h-2zM3 5h1v1h-1zM7 5h3v1h-3zM3 6h2v1h-2zM6 6h3v1h-3zM3 7h5v1h-5zM4 8h3v1h-3zM5 9h1v1h-1z" fill="#000"/></svg>
<div class="t" style="left:62px;top:675px;width:99px;text-align:center;">FixedProfit</div>
<div class="t" style="left:805px;top:675px;width:55px;text-align:center;">-1270</div>
<div style="position:absolute;left:10px;top:691px;width:940px;height:1px;background:#000"></div>
<div style="position:absolute;left:805px;top:692px;width:55px;height:21px;background:#90ee90"></div>
<div style="position:absolute;left:30px;top:696px;width:13px;height:13px;background:#fff"></div>
<div style="position:absolute;left:30px;top:696px;width:12px;height:12px;background:#808080"></div>
<div style="position:absolute;left:31px;top:697px;width:11px;height:11px;background:#d4d0c8"></div>
<div style="position:absolute;left:31px;top:697px;width:10px;height:10px;background:#404040"></div>
<div style="position:absolute;left:32px;top:698px;width:9px;height:9px;background:#f0f0f0"></div>
<svg style="position:absolute;left:30px;top:696px" width="13" height="13"><path d="M9 3h1v1h-1zM8 4h2v1h-2zM3 5h1v1h-1zM7 5h3v1h-3zM3 6h2v1h-2zM6 6h3v1h-3zM3 7h5v1h-5zM4 8h3v1h-3zM5 9h1v1h-1z" fill="#000"/></svg>
<div class="t" style="left:62px;top:697px;width:99px;text-align:center;">Итого:</div>
<div class="t" style="left:805px;top:697px;width:55px;text-align:center;">7575,92</div>
<div style="position:absolute;left:10px;top:713px;width:940px;height:1px;background:#000"></div>
<div style="position:absolute;left:61px;top:538px;width:1px;height:176px;background:#000"></div>
<div style="position:absolute;left:161px;top:538px;width:1px;height:176px;background:#000"></div>
<div style="position:absolute;left:230px;top:538px;width:1px;height:176px;background:#000"></div>
<div style="position:absolute;left:317px;top:538px;width:1px;height:176px;background:#000"></div>
<div style="position:absolute;left:419px;top:538px;width:1px;height:176px;background:#000"></div>
<div style="position:absolute;left:491px;top:538px;width:1px;height:176px;background:#000"></div>
<div style="position:absolute;left:572px;top:538px;width:1px;height:176px;background:#000"></div>
<div style="position:absolute;left:699px;top:538px;width:1px;height:176px;background:#000"></div>
<div style="position:absolute;left:804px;top:538px;width:1px;height:176px;background:#000"></div>
<div style="position:absolute;left:860px;top:538px;width:1px;height:176px;background:#000"></div>
<div style="position:absolute;left:10px;top:506px;width:940px;height:2px;background:#000"></div>
<div style="position:absolute;left:10px;top:714px;width:940px;height:4px;background:#f5f5f5"></div>
<div style="position:absolute;left:12px;top:717px;width:937px;height:1px;background:#dcd8d0"></div>
<div style="position:absolute;left:10px;top:506px;width:2px;height:212px;background:#000"></div>
<div style="position:absolute;left:949px;top:506px;width:1px;height:212px;background:#000"></div>
<div style="position:absolute;left:4px;top:719px;width:953px;height:22px;background:#d3d3d3"></div>
<div class="t" style="left:8px;top:725px;letter-spacing:-0.3px">Время обновления 45 мс</div>
<div class="t" style="left:136px;top:725px;letter-spacing:0.05px">Profit=7575,92 Delta(Δ)=-0,71 Gamma(Γ)=-0,000248</div>
<div class="t" style="left:401px;top:725px;letter-spacing:0.2px">Vega=-276,79 Theta(Θ)=585,04</div>
<div style="position:absolute;left:952px;top:727px;width:2px;height:2px;background:#808080"></div>
<div style="position:absolute;left:953px;top:728px;width:1px;height:1px;background:#fff"></div>
<div style="position:absolute;left:948px;top:731px;width:2px;height:2px;background:#808080"></div>
<div style="position:absolute;left:949px;top:732px;width:1px;height:1px;background:#fff"></div>
<div style="position:absolute;left:952px;top:731px;width:2px;height:2px;background:#808080"></div>
<div style="position:absolute;left:953px;top:732px;width:1px;height:1px;background:#fff"></div>
<div style="position:absolute;left:944px;top:735px;width:2px;height:2px;background:#808080"></div>
<div style="position:absolute;left:945px;top:736px;width:1px;height:1px;background:#fff"></div>
<div style="position:absolute;left:948px;top:735px;width:2px;height:2px;background:#808080"></div>
<div style="position:absolute;left:949px;top:736px;width:1px;height:1px;background:#fff"></div>
<div style="position:absolute;left:952px;top:735px;width:2px;height:2px;background:#808080"></div>
<div style="position:absolute;left:953px;top:736px;width:1px;height:1px;background:#fff"></div>
</body></html>
